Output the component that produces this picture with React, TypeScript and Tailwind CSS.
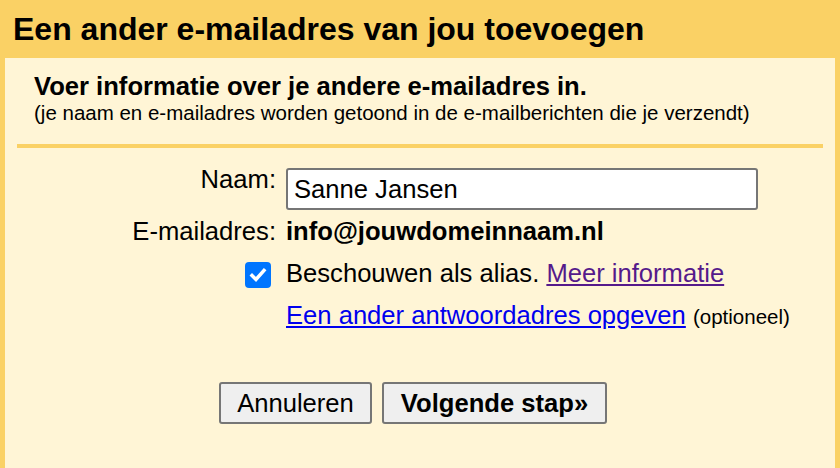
export default function App() {
	return (
		<div
			className="w-[840px] h-[468px] overflow-hidden bg-[#fad165] px-[5px] flex flex-col text-black"
			style={{ fontFamily: '"Liberation Sans", Arial, sans-serif' }}
		>
			<div className="h-[58px] pl-[8px] pt-[11px] shrink-0">
				<h1 className="text-[32px] leading-[37px] font-bold">Een ander e-mailadres van jou toevoegen</h1>
			</div>
			<div className="flex-1 bg-[#fff5d6] px-[12px] pt-[14px]">
				<div className="pl-[17px]">
					<div className="text-[25.6px] leading-[29px] font-bold">Voer informatie over je andere e-mailadres in.</div>
					<div className="text-[20.5px] leading-[23px]">
						(je naam en e-mailadres worden getoond in de e-mailberichten die je verzendt)
					</div>
				</div>
				<div className="mt-[20px] h-[4px] bg-[#fad165]" />

				<div className="text-[25.6px] leading-[29px]">
					<div className="flex mt-[17px]">
						<div className="w-[259px] text-right">Naam:</div>
						<input
							className="ml-[10px] mt-[3px] w-[472px] h-[42px] border-2 border-[#767676] rounded-[3px] bg-white px-[6px] outline-none"
							defaultValue="Sanne Jansen"
						/>
					</div>
					<div className="flex mt-[7px]">
						<div className="w-[259px] text-right">E-mailadres:</div>
						<div className="ml-[10px] font-bold">info@jouwdomeinnaam.nl</div>
					</div>
					<div className="flex mt-[13px] items-start">
						<div className="w-[259px] flex justify-end pr-[5px] pt-[3px]">
							<span className="w-[26px] h-[26px] rounded-[4px] bg-[#0075ff] flex items-center justify-center">
								<svg viewBox="0 0 16 16" className="w-[20px] h-[20px]" fill="none">
									<path d="M3.2 8.4 6.4 11.6 12.8 4.4" stroke="white" strokeWidth="2.8" strokeLinecap="square" />
								</svg>
							</span>
						</div>
						<div className="ml-[10px]">
							Beschouwen als alias.{" "}
							<a href="#" className="text-[#551a8b] underline">Meer informatie</a>
						</div>
					</div>
					<div className="flex mt-[13px]">
						<div className="w-[259px]" />
						<div className="ml-[10px]">
							<a href="#" className="text-[#0000ee] underline">Een ander antwoordadres opgeven</a>{" "}
							<span className="text-[20.5px]">(optioneel)</span>
						</div>
					</div>
					<div className="flex gap-[10px] ml-[202px] mt-[51px]">
						<button className="w-[153px] h-[42px] bg-[#efefef] border-2 border-[#767676] rounded-[3px]">Annuleren</button>
						<button className="w-[225px] h-[42px] bg-[#efefef] border-2 border-[#767676] rounded-[3px] font-bold">Volgende stap»</button>
					</div>
				</div>
			</div>
		</div>
	)
}
